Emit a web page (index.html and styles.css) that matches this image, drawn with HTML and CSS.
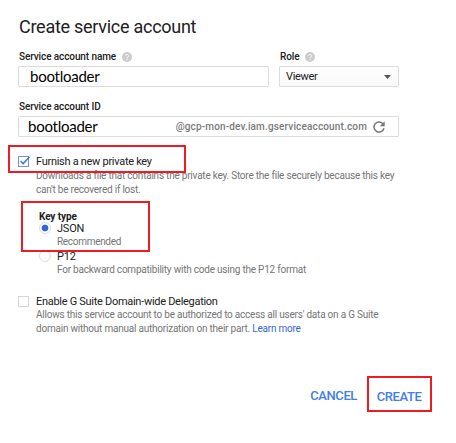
FILE: index.html
```
<!DOCTYPE html>
<html lang="en">
<head>
<meta charset="utf-8">
<title>Create service account</title>
<link rel="stylesheet" href="styles.css">
</head>
<body>
<main class="dialog">
  <h1 class="title">Create service account</h1>
  <div class="fields">
    <div class="field name">
      <div class="label"><span>Service account name</span><svg class="help" viewBox="0 0 10 10"><circle cx="5" cy="5" r="5" fill="#ccc"/><path d="M3.5 4a1.5 1.5 0 1 1 2.4 1.1C5.3 5.5 5 5.7 5 6.3M5 7.1v1" fill="none" stroke="#fff" stroke-width="1"/></svg></div>
      <div class="input typed"><span>bootloader</span></div>
    </div>
    <div class="field role">
      <div class="label"><span>Role</span><svg class="help" viewBox="0 0 10 10"><circle cx="5" cy="5" r="5" fill="#ccc"/><path d="M3.5 4a1.5 1.5 0 1 1 2.4 1.1C5.3 5.5 5 5.7 5 6.3M5 7.1v1" fill="none" stroke="#fff" stroke-width="1"/></svg></div>
      <div class="input select"><span>Viewer</span><svg class="caret" viewBox="0 0 7 4"><path d="M0 0h7L3.5 4z" fill="#555"/></svg></div>
    </div>
  </div>
  <div class="field id">
    <div class="label"><span>Service account ID</span></div>
    <div class="input typed id-input"><span>bootloader</span><span class="domain">@gcp-mon-dev.iam.gserviceaccount.com</span><svg class="refresh" viewBox="0 0 12 12"><path d="M10.2 3A5.1 5.1 0 1 0 11 7.3" fill="none" stroke="#777" stroke-width="1.5"/><path d="M11.7.2v5H6.8z" fill="#777"/></svg></div>
  </div>
  <section class="option key">
    <svg class="box" viewBox="0 0 12 12"><rect x=".5" y=".5" width="10" height="10" fill="#fff" stroke="#6d93e8"/><path d="M2.6 4.9l2.5 2.7L11.4.9" fill="none" stroke="#3f73df" stroke-width="1.4"/></svg>
    <div class="body">
      <div class="head">Furnish a new private key</div>
      <p class="desc">Downloads a file that contains the private key. Store the file securely because this key<br>can't be recovered if lost.</p>
    </div>
    <div class="mark mark-key"></div>
  </section>
  <section class="types">
    <div class="legend">Key type</div>
    <div class="choice">
      <span class="radio on"></span>
      <div><div class="choice-name">JSON</div><div class="desc recommended">Recommended</div></div>
    </div>
    <div class="choice">
      <span class="radio"></span>
      <div><div class="choice-name">P12</div><div class="desc">For backward compatibility with code using the P12 format</div></div>
    </div>
    <div class="mark mark-type"></div>
  </section>
  <section class="option suite">
    <svg class="box" viewBox="0 0 12 12"><rect x=".5" y=".5" width="10" height="10" fill="#fff" stroke="#d6d6d6"/></svg>
    <div class="body">
      <div class="head">Enable G Suite Domain-wide Delegation</div>
      <p class="desc">Allows this service account to be authorized to access all users' data on a G Suite<br>domain without manual authorization on their part. <a>Learn more</a></p>
    </div>
  </section>
  <div class="actions"><span class="cancel">CANCEL</span><span class="create">CREATE</span></div>
</main>
</body>
</html>
```
FILE: styles.css
```
* { box-sizing: border-box; }
body { margin: 0; background: #fff; color: #212121; font: 11px/13px Roboto, sans-serif; }
.dialog { width: 456px; height: 443px; padding: 14px 0 0 18px; overflow: hidden; white-space: nowrap; }
.title { margin: 0; font-size: 18px; font-weight: 400; line-height: 25px; padding-left: 1px; letter-spacing: -.27px; }
.fields { display: flex; gap: 10px; margin-top: 11px; }
.name { width: 251px; }
.role { width: 120px; }
.label { display: flex; align-items: center; height: 13px; font-size: 10px; font-weight: 500; padding-left: 1px; letter-spacing: -.1px; }
.help { width: 10px; height: 10px; margin-left: 6px; }
.input { display: flex; align-items: center; height: 21px; margin-top: 3px; border: 1px solid #dcdcdc; border-radius: 1px; }
.typed { font: 15px/19px Lato, sans-serif; letter-spacing: -.25px; color: #000; padding-left: 11px; }
.select { padding: 0 7px 0 6px; background: linear-gradient(#fff, #f8f8f8); justify-content: space-between; letter-spacing: -.3px; }
.caret { width: 7px; height: 4px; }
.id { width: 381px; margin-top: 13px; }
.id-input { padding-left: 9px; }
.domain { font: 500 10px/19px Roboto, sans-serif; letter-spacing: .15px; color: #7a7a7a; margin-left: auto; }
.refresh { width: 12px; height: 12px; margin: 1px 13px 0 6px; }
.option { display: flex; position: relative; }
.key { margin-top: 17px; }
.box { width: 12px; height: 12px; margin-top: 2px; overflow: visible; flex: none; }
.body { margin-left: 6px; }
.head { height: 14px; line-height: 15px; letter-spacing: -.29px; }
.key .head { height: 15px; }
.desc { margin: 0; font-size: 10px; line-height: 14px; color: #757575; letter-spacing: -.22px; }
.recommended { letter-spacing: -.3px; }
.types { position: relative; padding-left: 21px; margin-top: 13px; }
.legend { height: 12px; line-height: 13px; font-size: 10px; font-weight: 700; letter-spacing: -.1px; }
.choice { display: flex; gap: 6px; height: 28px; }
.choice-name { height: 13px; line-height: 13px; font-size: 11px; letter-spacing: -.2px; }
.radio { width: 12px; height: 12px; border: 1px solid #ddd; border-radius: 50%; flex: none; }
.on { background: radial-gradient(circle, #3367d6 3px, #fff 3.8px); }
.mark { position: absolute; border: 2px solid #ed1c24; }
.mark-key { left: -10px; top: -9px; width: 178px; height: 28px; }
.mark-type { left: 3px; top: -9px; width: 129px; height: 51px; }
.suite { margin-top: 16px; }
a { color: #3367d6; }
.actions { display: flex; align-items: center; justify-content: flex-end; margin: 40px 24px 0 0; font-size: 13px; font-weight: 500; color: #427de9; gap: 10px; letter-spacing: -.4px; }
.cancel { padding-top: 2px; }
.create { width: 65px; height: 36px; padding: 2px 1px 0 0; border: 2px solid #ed1c24; text-align: center; line-height: 33px; }
```
